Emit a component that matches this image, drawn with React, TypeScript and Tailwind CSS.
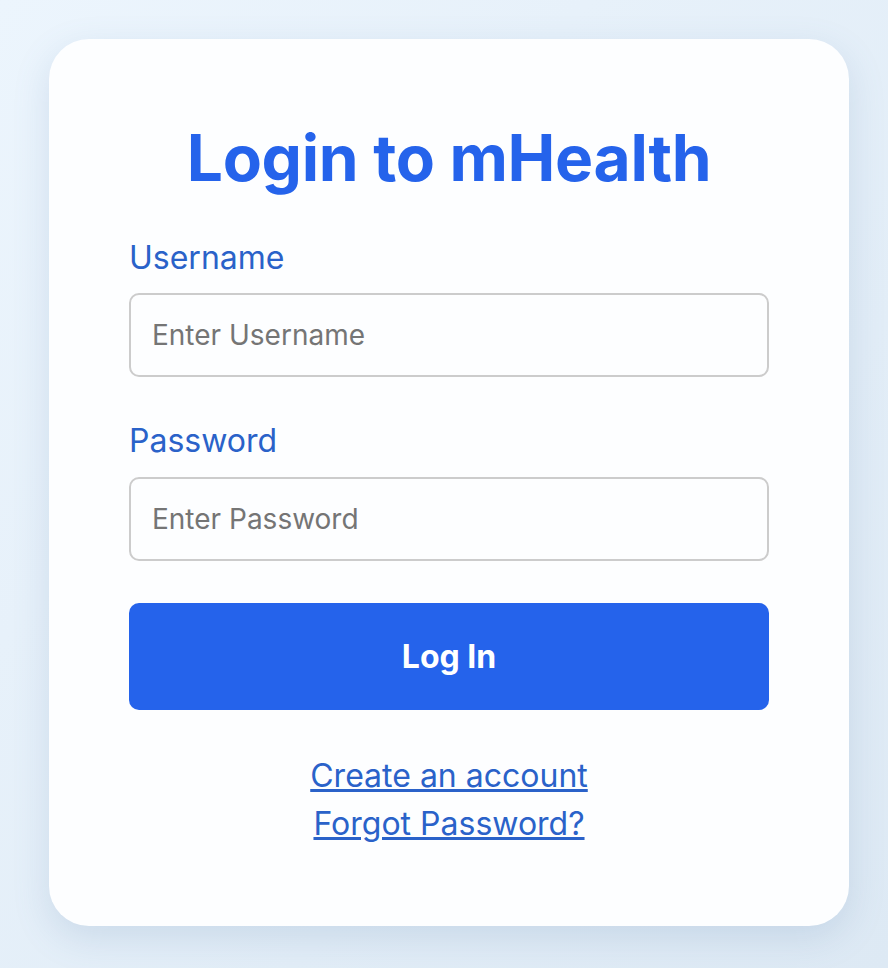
export default function App() {
  return (
    <div
      className="min-h-screen bg-gradient-to-br from-[#ecf5fd] to-[#dde9f4] flex justify-center pl-[10px] pt-[39px] pb-[42px]"
      style={{ fontFamily: 'Inter, "Noto Sans", sans-serif' }}
    >
      <div className="w-[800px] h-[887px] bg-[#fdfeff] rounded-[40px] shadow-[0_12px_36px_rgba(90,130,170,0.18)] px-[80px] pt-[87px]">
        <h1 className="text-[64px] leading-[64px] font-bold text-[#2563eb] text-center tracking-[-0.3px]">
          Login to mHealth
        </h1>

        <form className="mt-[48px]">
          <label className="block text-[32px] leading-[40px] text-[#2a62c9] mb-[15px]">Username</label>
          <input
            type="text"
            placeholder="Enter Username"
            className="w-full h-[84px] border-2 border-[#cccccc] rounded-[10px] px-[21px] text-[28px] text-[#333] placeholder:text-[#757575] outline-none"
          />

          <label className="block text-[32px] leading-[40px] text-[#2a62c9] mt-[44px] mb-[16px]">Password</label>
          <input
            type="password"
            placeholder="Enter Password"
            className="w-full h-[84px] border-2 border-[#cccccc] rounded-[10px] px-[21px] text-[28px] text-[#333] placeholder:text-[#757575] outline-none"
          />

          <button
            type="button"
            className="w-full h-[107px] mt-[42px] bg-[#2563eb] rounded-[10px] text-white text-[32px] font-bold"
          >
            Log In
          </button>
        </form>

        <div className="mt-[42px] flex flex-col items-center text-[32px] leading-[48px] text-[#2a62c9]">
          <a href="#" className="underline">Create an account</a>
          <a href="#" className="underline">Forgot Password?</a>
        </div>
      </div>
    </div>
  );
}
